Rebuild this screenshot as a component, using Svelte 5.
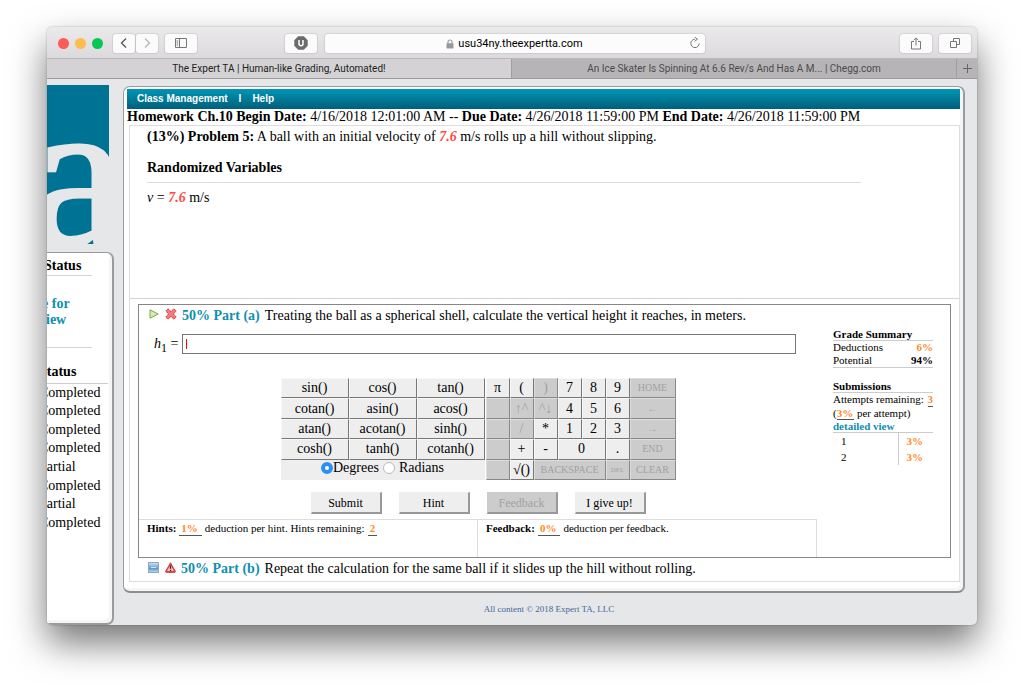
<script>
  const assignments = ['Completed', 'Completed', 'Completed', 'Completed', 'Partial', 'Completed', 'Partial', 'Completed'];
  const functionKeys = [
    'sin()', 'cos()', 'tan()',
    'cotan()', 'asin()', 'acos()',
    'atan()', 'acotan()', 'sinh()',
    'cosh()', 'tanh()', 'cotanh()'
  ];
  const keys = [
    { label: 'π' }, { label: '(' }, { label: ')', off: true }, { label: '7' }, { label: '8' }, { label: '9' }, { label: 'HOME', off: true, small: true },
    { label: '', off: true }, { label: '↑^', off: true }, { label: '^↓', off: true }, { label: '4' }, { label: '5' }, { label: '6' }, { label: '←', off: true, small: true },
    { label: '', off: true }, { label: '/', off: true }, { label: '*' }, { label: '1' }, { label: '2' }, { label: '3' }, { label: '→', off: true, small: true },
    { label: '', off: true }, { label: '+' }, { label: '-' }, { label: '0', span: 2 }, { label: '.' }, { label: 'END', off: true, small: true },
    { label: '', off: true }, { label: '√()' }, { label: 'BACKSPACE', off: true, small: true, span: 3 }, { label: 'DEL', off: true, tiny: true }, { label: 'CLEAR', off: true, small: true }
  ];
  const submissions = ['3%', '3%'];
  let unit = $state('degrees');
  let answer = $state('');
</script>

<div class="window">
  <header class="toolbar">
    <div class="group">
      <div class="lights"><i class="red"></i><i class="amber"></i><i class="green"></i></div>
      <div class="pair">
        <button class="tool" aria-label="Back"><svg width="22" height="18" viewBox="0 0 22 18"><path d="M13 4.500 8.500 9l4.500 4.500" fill="none" stroke="#555" stroke-width="1.300" /></svg></button>
        <button class="tool" aria-label="Forward"><svg width="22" height="18" viewBox="0 0 22 18"><path d="M9 4.500 13.500 9 9 13.500" fill="none" stroke="#b5b5b5" stroke-width="1.300" /></svg></button>
      </div>
      <button class="tool wide" aria-label="Sidebar"><svg width="14" height="12" viewBox="0 0 14 12"><path d="M1.500 1.500h11v9h-11zM5.500 1.500v9M2.500 4h1.700M2.500 6h1.700M2.500 8h1.700" fill="none" stroke="#777" /></svg></button>
      <button class="tool wide shield" aria-label="Blocker"><svg width="14" height="14" viewBox="0 0 14 14"><path d="M4.200.3h5.600l3.900 3.900v5.600l-3.900 3.900H4.200L.3 9.800V4.200z" fill="#6b6b6b" /><path d="M5 4v3.700a2 2 0 0 0 4 0V4" fill="none" stroke="#fff" stroke-width="1.500" /></svg></button>
    </div>
    <div class="address">
      <svg width="8" height="10" viewBox="0 0 8 10"><path d="M2 5V3a2 2 0 0 1 4 0v2" fill="none" stroke="#999" stroke-width="1.200" /><rect x=".5" y="4.300" width="7" height="5.200" rx=".7" fill="#999" /></svg>
      <span>usu34ny.theexpertta.com</span>
      <svg class="reload" width="12" height="12" viewBox="0 0 12 12"><path d="M6 2.200A4.200 4.200 0 1 0 10.200 6.400" fill="none" stroke="#777" /><path d="M5.500 0 8.500 2.200 5.500 4.400" fill="none" stroke="#777" /></svg>
    </div>
    <div class="group end">
      <button class="tool wide" aria-label="Share"><svg width="12" height="13" viewBox="0 0 12 13"><path d="M4 4.500H1.500v7.500h9V4.500H8M6 8.500V1M3.700 3.200 6 .9l2.300 2.300" fill="none" stroke="#777" /></svg></button>
      <button class="tool wide" aria-label="Show tabs"><svg width="12" height="12" viewBox="0 0 12 12"><path d="M1.500 4.500h6v6h-6zM4.500 4.500v-3h6v6h-3" fill="none" stroke="#777" /></svg></button>
    </div>
  </header>

  <nav class="tabs" aria-label="Tabs">
    <button class="tab current">The Expert TA | Human-like Grading, Automated!</button>
    <button class="tab">An Ice Skater Is Spinning At 6.6 Rev/s And Has A M... | Chegg.com</button>
    <button class="plus" aria-label="New tab"><svg width="11" height="11" viewBox="0 0 11 11"><path d="M5.500 1v9M1 5.500h9" stroke="#666" /></svg></button>
  </nav>

  <div class="page">
    <aside>
      <svg class="logo" width="62" height="159" viewBox="0 0 62 159" aria-hidden="true">
        <rect width="62" height="159" fill="#007394" />
        <text x="-17" y="162" font-size="216" fill="#e6e7e8" stroke="#e6e7e8" stroke-width="3">a</text>
      </svg>
      <div class="status">
        <h2>Status</h2>
        <hr />
        <a href="#review"><span>e for</span><span>view</span></a>
        <hr />
        <table>
          <thead><tr><th>Status</th></tr></thead>
          <tbody>
            {#each assignments as state}
              <tr><td>{state}</td></tr>
            {/each}
          </tbody>
        </table>
      </div>
    </aside>

    <div class="column">
      <main>
        <nav class="menu"><a href="#class">Class Management</a><span>I</span><a href="#help">Help</a></nav>
        <p class="dates"><b>Homework Ch.10</b> <b>Begin Date:</b> 4/16/2018 12:01:00 AM -- <b>Due Date:</b> 4/26/2018 11:59:00 PM <b>End Date:</b> 4/26/2018 11:59:00 PM</p>

        <div class="sheet">
          <section class="problem">
            <p><b>(13%) Problem 5:</b> A ball with an initial velocity of <em class="strong">7.6</em> m/s rolls up a hill without slipping.</p>
            <h3>Randomized Variables</h3>
            <p class="given"><i>v</i> = <em class="strong">7.6</em> m/s</p>
          </section>

          <section class="part">
            <div class="work">
              <p class="question">
                <svg width="10" height="10" viewBox="0 0 10 10"><path d="M1 .8 9.200 5 1 9.200z" fill="#d5eeb0" stroke="#7ba550" /></svg>
                <svg width="12" height="12" viewBox="0 0 12 12"><path d="M3 .8 6 3.600 9 .8 11.200 3 8.400 6l2.800 3L9 11.200 6 8.400 3 11.200.8 9 3.600 6 .8 3z" fill="#f47c7c" stroke="#cf3340" stroke-dasharray="2 .6" /></svg>
                <b>50% Part (a)</b><span>Treating the ball as a spherical shell, calculate the vertical height it reaches, in meters.</span>
              </p>
              <div class="answer">
                <label for="answer"><i>h</i><sub>1</sub> =</label>
                <div class="field"><i class="caret"></i><input id="answer" type="text" bind:value={answer} /></div>
              </div>

              <div class="keypad">
                <div class="functions">
                  {#each functionKeys as name}
                    <button class="key">{name}</button>
                  {/each}
                  <div class="units">
                    <label><input type="radio" name="unit" value="degrees" bind:group={unit} />Degrees</label>
                    <label class="spaced"><input type="radio" name="unit" value="radians" bind:group={unit} />Radians</label>
                  </div>
                </div>
                <div class="numbers">
                  {#each keys as key}
                    <button class="key" class:two={key.span === 2} class:three={key.span === 3} class:small={key.small} class:tiny={key.tiny} disabled={key.off}>{key.label}</button>
                  {/each}
                </div>
              </div>

              <div class="actions">
                <button class="key">Submit</button>
                <button class="key">Hint</button>
                <button class="key" disabled>Feedback</button>
                <button class="key">I give up!</button>
              </div>

              <div class="notes">
                <p><b>Hints:</b><u class="wide-score">1%</u>deduction per hint. Hints remaining:<u>2</u></p>
                <p><b>Feedback:</b><u class="wide-score">0%</u>deduction per feedback.</p>
              </div>
            </div>

            <div class="summary">
              <h4>Grade Summary</h4>
              <p class="pairing"><span>Deductions</span><b class="score">6%</b></p>
              <p class="pairing"><span>Potential</span><b>94%</b></p>
              <h4 class="second">Submissions</h4>
              <p class="pairing"><span>Attempts remaining:</span><u>3</u></p>
              <p>(<u class="inline">3%</u> per attempt)</p>
              <a href="#detail">detailed view</a>
              <table>
                <tbody>
                  {#each submissions as penalty, i}
                    <tr><td>{i + 1}</td><td class="score">{penalty}</td></tr>
                  {/each}
                </tbody>
              </table>
            </div>
          </section>

          <p class="question next">
            <svg width="11" height="11" viewBox="0 0 11 11"><defs><linearGradient id="tile" x2="0" y2="1"><stop stop-color="#d5e5f3" /><stop offset=".6" stop-color="#5f96c8" /><stop offset="1" stop-color="#c8dff0" /></linearGradient></defs><rect x=".5" y=".5" width="10" height="10" fill="url(#tile)" stroke="#86a9c9" /><path d="M3 5.500h5" stroke="#d8e8f5" /></svg>
            <svg width="11" height="11" viewBox="0 0 11 11"><path d="M5.500.7 10.400 9.300Q10.600 10.400 9.600 10.400H1.400Q.4 10.400.6 9.300z" fill="#d9484c" stroke="#b7262f" stroke-width=".7" /><path d="M5.500 2.800 8.900 9H2.100z" fill="#f6c6c6" /><path d="M5.500 3.500v3.300M5.500 7.700v1.300" stroke="#5c1015" stroke-width="1.300" /></svg>
            <b>50% Part (b)</b><span>Repeat the calculation for the same ball if it slides up the hill without rolling.</span>
          </p>
        </div>
      </main>
      <footer>All content © 2018 Expert TA, LLC</footer>
    </div>
  </div>
</div>

<style>
  :global(body) { background: #fff; }
  * { box-sizing: border-box; }
  p, h2, h3, h4 { margin: 0; }
  button { font: inherit; color: inherit; padding: 0; }
  a { color: inherit; text-decoration: none; }
  svg { display: block; flex: none; }

  .window {
    margin: 27px 47px 68px;
    border-radius: 5px;
    background: #e6e7e8;
    box-shadow: 0 18px 36px rgba(0, 0, 0, 0.54), 0 0 2px rgba(0, 0, 0, 0.3);
    font: 14px/16px "Liberation Serif", serif;
    color: #000;
    overflow: hidden;
  }

  .toolbar {
    display: grid;
    grid-template-columns: 1fr minmax(0, 380px) 1fr;
    align-items: center;
    height: 31px;
    padding: 1px 6px 0 11px;
    background: linear-gradient(#ebe9eb, #dcdadc);
    font: 11px/18px Roboto, sans-serif;
  }
  .group { display: flex; align-items: center; padding-right: 8px; }
  .end { justify-content: flex-end; gap: 7px; padding-right: 0; }
  .lights { display: flex; gap: 6px; margin-right: 10px; }
  .lights i { width: 11px; height: 11px; border-radius: 50%; }
  .red { background: #fc5b57; }
  .amber { background: #fdbc4b; }
  .green { background: #06c656; }
  .pair { display: flex; gap: 1px; margin-right: 7px; }
  .tool {
    display: grid;
    place-items: center;
    width: 22px;
    height: 19px;
    border: 0;
    border-radius: 3px;
    background: #fbfbfb;
    box-shadow: 0 0 1px 1px rgba(0, 0, 0, 0.08);
  }
  .wide { width: 32px; }
  .shield { margin-left: auto; }
  .address {
    display: flex;
    align-items: center;
    justify-content: center;
    gap: 4px;
    position: relative;
    height: 19px;
    padding-top: 1px;
    border-radius: 3px;
    background: #fcfcfc;
    box-shadow: 0 0 1px 1px rgba(0, 0, 0, 0.08);
  }
  .reload { position: absolute; right: 4px; top: 3px; }

  .tabs {
    display: flex;
    height: 21px;
    border-top: 1px solid #bab8ba;
    border-bottom: 1px solid #9c9b9c;
    font: 10px/18px Roboto, sans-serif;
  }
  .tab {
    flex: 1 1 0;
    border: 0;
    border-right: 1px solid #a09fa0;
    background: #b6b4b6;
    color: #4c4b4c;
    white-space: nowrap;
    overflow: hidden;
  }
  .current { flex-grow: 1.045; background: #d4d2d4; color: #222; }
  .plus { display: grid; place-items: center; width: 20px; border: 0; background: #b6b4b6; }

  .page { display: flex; }
  aside { display: flex; flex-direction: column; width: 67px; padding-top: 6px; overflow: hidden; flex: none; }
  .logo { font-family: "Liberation Serif", serif; }
  .status {
    flex: 1;
    margin-top: 8px;
    padding: 5px 4px 0 0;
    border: solid #9b9b9b;
    border-width: 1px 2px 2px 0;
    border-radius: 0 7px 7px 0;
    background: #fff;
    box-shadow: inset -3px -3px #f5f5f5;
  }
  .status h2 { margin-left: -3px; font-size: 14px; }
  .status hr { width: 45px; margin: 1px 0 20px; border: 0; border-top: 1px solid #d5d5d5; }
  .status a { color: #0e8fb0; font-weight: bold; }
  .status a span { display: block; margin-left: -5px; }
  .status a span:last-child { margin-left: -8px; }
  .status a + hr { margin: 19px 0 16px; }
  .status table { width: 100%; height: 168px; border-collapse: collapse; }
  .status th { height: 19px; padding: 0 0 2px; border-bottom: 1px solid #ccc; text-align: left; text-indent: -8px; }
  .status td { padding: 0; text-indent: -8px; }

  .column { flex: 1; min-width: 0; padding: 7px 12px 0 9px; }
  main {
    padding: 2px 3px 9px;
    border: 1px solid #9b9b9b;
    border-bottom: 2px solid #8e8e8e;
    border-right-width: 2px;
    border-radius: 7px;
    background: #fff;
    box-shadow: inset -3px -3px #f5f5f5;
  }
  .menu {
    display: flex;
    gap: 11px;
    padding: 0 10px;
    background: linear-gradient(#0095b6, #005f7a);
    color: #fff;
    font: bold 10px/20px "Liberation Sans", sans-serif;
  }
  .dates { white-space: nowrap; }
  .sheet { margin: 0 0 0 2px; border: 1px solid #ddd; }
  .problem { height: 173px; padding: 3px 98px 0 17px; border-bottom: 1px solid #d5d5d5; }
  .problem p { white-space: nowrap; }
  h3 { margin: 15px 0; padding-bottom: 7px; border-bottom: 1px solid #ddd; font-size: 14px; line-height: 15px; }
  .problem .given { margin-top: -8px; }
  em { color: #ff4b45; }
  .strong { font-weight: bold; }

  .part { display: flex; margin: 5px 8px 0; border: 1px solid #878787; }
  .work { flex: 1; min-width: 0; }
  .question { display: flex; align-items: center; padding: 3px 0 0 10px; white-space: nowrap; }
  .question svg { margin: -4px 6px 0 0; }
  .question b { margin: 0 5px 0 -1px; color: #0e8fb0; }
  .answer { display: flex; align-items: center; gap: 4px; margin: 10px 21px 24px 15px; }
  .answer label { line-height: 20px; }
  sub { font-size: 12px; line-height: 1px; }
  .field { display: flex; flex: 1; align-items: center; height: 20px; padding-left: 3px; border: 1px solid #777; }
  .caret { width: 1px; height: 10px; background: #f00; }
  .field input { flex: 1; min-width: 0; border: 0; outline: 0; font: inherit; }

  .keypad { display: flex; justify-content: center; gap: 1px; }
  .functions { display: grid; grid-template-columns: repeat(3, 68px); grid-template-rows: repeat(5, 1fr); height: 102px; background: #eee; }
  .numbers { display: grid; grid-template-columns: repeat(6, 24px) 46px; grid-template-rows: repeat(5, 1fr); height: 102px; }
  .key {
    min-width: 0;
    border: 1px solid;
    border-color: #f8f8f8 #777 #777 #f8f8f8;
    background: #eee;
    line-height: 16px;
    white-space: nowrap;
    overflow: hidden;
  }
  .key:disabled { border-color: #ddd #888 #888 #ddd; background: #ccc; color: #a2a2a2; }
  .small { font-size: 10px; }
  .tiny { font-size: 7px; }
  .two { grid-column: span 2; }
  .three { grid-column: span 3; }
  .units { display: flex; grid-column: 1 / -1; justify-content: center; align-items: flex-start; }
  .units label { display: flex; align-items: center; }
  .spaced { margin-left: 4px; gap: 4px; }
  .units input { appearance: none; width: 12px; height: 12px; margin: 0; border: 1px solid #bbb; border-radius: 50%; background: #fff; }
  .units input:checked { border: 4px solid #2b8ff5; }

  .actions { display: flex; justify-content: center; gap: 17px; margin: 12px 0 5px; font-size: 12px; }
  .actions .key { width: 71px; height: 22px; border-width: 1px 2px 2px 1px; border-color: #eee #999 #999 #eee; }
  .actions .key:disabled { border-color: #ccc #999 #999 #ccc; }
  .notes { display: flex; font-size: 11px; line-height: 13px; }
  .notes p { flex: 1; height: 38px; padding: 2px 8px; border: solid #ddd; border-width: 1px 1px 0 0; white-space: nowrap; }
  u { color: #ff8a2c; font-weight: bold; text-decoration: none; border-bottom: 1px solid #555; }
  .notes u { display: inline-block; padding: 0 2px; margin: 0 3px; }
  .notes .wide-score { padding-right: 4px; }

  .summary { width: 133px; padding: 23px 17px 0 16px; font-size: 11px; line-height: 13px; white-space: nowrap; }
  .summary h4 { border-bottom: 1px solid #ccc; font-size: 11px; line-height: 12px; }
  .summary .second { margin-top: 12px; }
  .pairing { display: flex; justify-content: space-between; }
  .pairing:has(+ .second) { border-bottom: 1px solid #ccc; }
  .score { color: #ff8a2c; font-weight: bold; }
  .summary a { display: block; border-bottom: 1px solid #ccc; color: #0e8fb0; font-weight: bold; line-height: 12px; }
  .summary .inline { padding-right: 1px; }
  .summary table { width: 100%; border-collapse: collapse; }
  .summary td { height: 16px; padding: 0 8px; }
  .summary td + td { width: 35px; border-left: 1px solid #ccc; }
  .next { padding-left: 18px; padding-bottom: 4px; }
  footer { padding: 8px 0 8px 10px; color: #3f6795; font-size: 9px; line-height: 16px; text-align: center; }
</style>
